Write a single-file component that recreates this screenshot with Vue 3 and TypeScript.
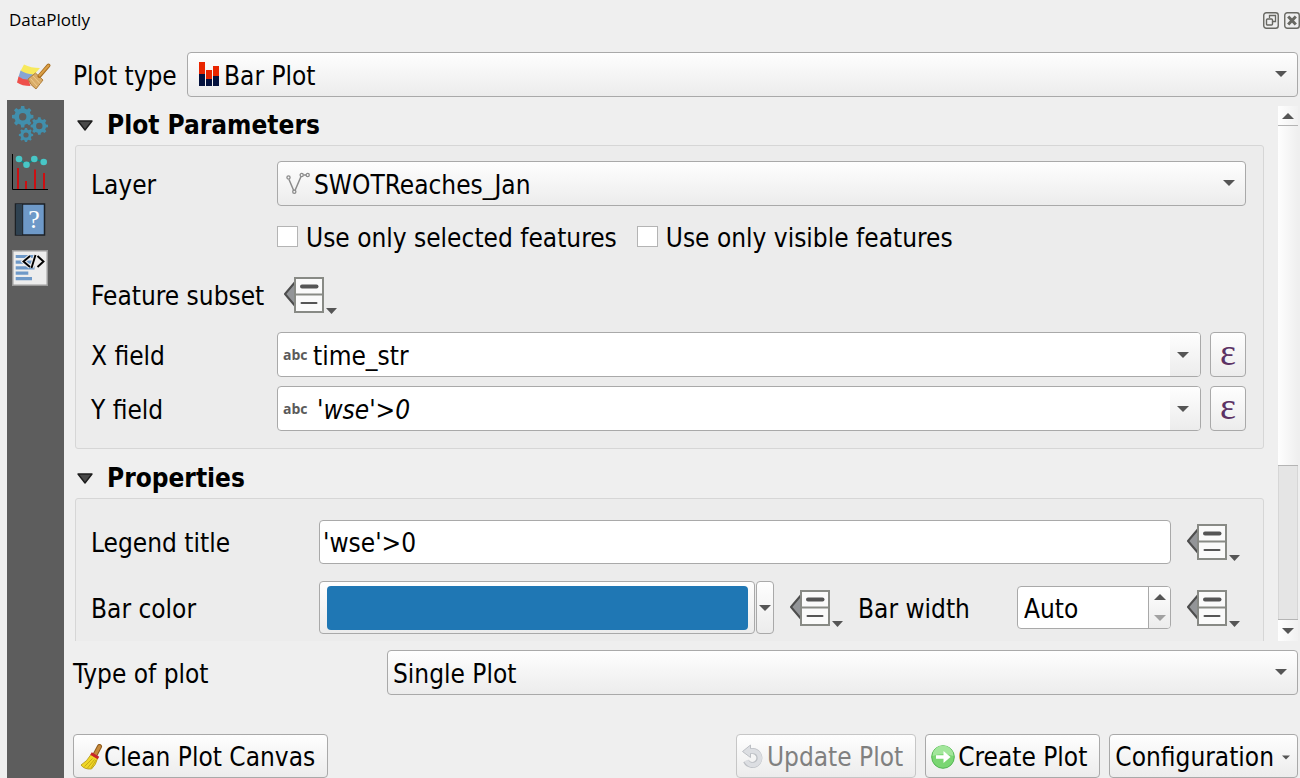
<script setup lang="ts">
import { ref } from 'vue'

const plotType = ref('Bar Plot')
const layer = ref('SWOTReaches_Jan')
const selectedOnly = ref(false)
const visibleOnly = ref(false)
const xField = ref('time_str')
const yField = ref("'wse'>0")
const legendTitle = ref("'wse'>0")
const barWidth = ref('Auto')
const plotMode = ref('Single Plot')

/** Outline of a toothed wheel with a round hole, for an evenodd fill. */
function gear(cx: number, cy: number, outer: number, inner: number, hole: number, teeth: number): string {
  const step = (Math.PI * 2) / teeth
  const points: string[] = []
  for (let i = 0; i < teeth; i++) {
    const a = i * step - Math.PI / 2
    const corners: [number, number][] = [
      [inner, -0.3],
      [outer, -0.19],
      [outer, 0.19],
      [inner, 0.3],
    ]
    for (const [r, k] of corners) {
      const t = a + k * step
      points.push(`${(cx + r * Math.cos(t)).toFixed(2)} ${(cy + r * Math.sin(t)).toFixed(2)}`)
    }
  }
  const ring = `M${cx - hole} ${cy}a${hole} ${hole} 0 1 0 ${hole * 2} 0a${hole} ${hole} 0 1 0 ${-hole * 2} 0Z`
  return `M${points.join('L')}Z${ring}`
}

const gears = [
  gear(10.7, 10.7, 10.8, 8.4, 3.7, 8),
  gear(27.3, 20, 8.8, 6.9, 3.2, 8),
  gear(14, 29, 7.2, 5.6, 2.6, 8),
].join('')
</script>

<template>
  <div class="panel">
    <svg class="defs" aria-hidden="true">
      <symbol id="arrow-down" viewBox="0 0 12 6"><path d="M0 0H12L6 6Z" fill="#555" /></symbol>
      <symbol id="arrow-up" viewBox="0 0 12 6"><path d="M0 6H12L6 0Z" fill="#555" /></symbol>
      <symbol id="fold" viewBox="0 0 16 11">
        <path d="M1 1H15L8 10Z" fill="#484848" stroke="#1c1c1c" stroke-width="1.4" stroke-linejoin="round" />
      </symbol>
      <symbol id="override" viewBox="0 0 54 38">
        <path d="M12 5L1 18L12 31" fill="#939598" stroke="#4d4d4d" stroke-width="2" stroke-linejoin="round" />
        <rect x="11" y="2" width="28" height="34" fill="#fafafa" stroke="#888a85" stroke-width="2" />
        <path d="M11 18.5H39" stroke="#888a85" stroke-width="2" />
        <path d="M18 10.5H32.500" stroke="#555" stroke-width="4" stroke-linecap="round" />
        <path d="M17.500 27H32.500" stroke="#555" stroke-width="2" stroke-linecap="round" />
        <path d="M42 32H53L47.500 38Z" fill="#555" />
      </symbol>
    </svg>

    <header class="titlebar">
      <span>DataPlotly</span>
      <div class="window-buttons">
        <button type="button" aria-label="Float">
          <svg width="16" height="17" viewBox="0 0 16 17" fill="none" stroke="#686862">
            <rect x="0.750" y="0.750" width="14.500" height="15.500" rx="2.500" stroke-width="1.400" />
            <path d="M6.500 6V3.500H12.500V9.500H10" stroke-width="1.300" />
            <rect x="3.500" y="7" width="6" height="6" rx="1" stroke-width="1.400" />
          </svg>
        </button>
        <button type="button" aria-label="Close">
          <svg width="16" height="17" viewBox="0 0 16 17" fill="none" stroke="#686862">
            <rect x="0.750" y="0.750" width="14.500" height="15.500" rx="2.500" stroke-width="1.400" />
            <path d="M4.200 4.500L11.800 12.500M11.800 4.500L4.200 12.500" stroke-width="3" />
          </svg>
        </button>
      </div>
    </header>

    <div class="body">
      <nav class="tabs" aria-label="Pages">
        <button type="button" class="tab active" aria-label="Plot style">
          <svg width="40" height="36" viewBox="0 0 40 36">
            <path d="M12 6.500Q19 10 28 10L21 18Q13 17 8.500 13Z" fill="#f7e95c" />
            <path d="M8.500 12.500Q14 16 21 16.500L16 23Q10 22 6.500 19Z" fill="#86a5d3" />
            <path d="M6.500 18.500Q11 22 16.500 21.500L18.500 28Q10 28 5 24.500Z" fill="#ee504b" />
            <path d="M16 21L23.500 15L31 22L24 31Q18 27 16 21Z" fill="#d9ac68" stroke="#b07f3c" stroke-width="1" />
            <path d="M18.500 20.500L25 28M21 18L28 25.500" stroke="#f0cc8c" stroke-width="1" />
            <path d="M27.500 18L36.500 7.500" stroke="#a66c1f" stroke-width="4" stroke-linecap="round" />
            <path d="M27.500 17.500L36.500 7.500" stroke="#dba047" stroke-width="2" stroke-linecap="round" />
          </svg>
        </button>
        <button type="button" class="tab" aria-label="Plot settings">
          <svg width="36" height="36" viewBox="0 0 36 36"><path :d="gears" fill="#418fac" fill-rule="evenodd" /></svg>
        </button>
        <button type="button" class="tab" aria-label="Plot">
          <svg width="36" height="36" viewBox="0 0 36 36" fill="none">
            <path d="M6 14V35M14 27V35M23 15.500V35M32 19V35" stroke="#cc0f12" stroke-width="2" />
            <path d="M0.500 0V35.500H36" stroke="#000" stroke-width="1" />
            <path d="M7 5L14.500 10.700L22.300 5L31.700 8" stroke="#0e7f7b" stroke-width="1.500" />
            <g fill="#48c6c6">
              <circle cx="7" cy="5" r="3.300" /><circle cx="14.500" cy="10.700" r="3.300" />
              <circle cx="22.300" cy="5" r="3.300" /><circle cx="31.700" cy="8" r="3.300" />
            </g>
          </svg>
        </button>
        <button type="button" class="tab" aria-label="Help">
          <svg width="36" height="36" viewBox="0 0 36 36">
            <rect x="3.500" y="2" width="29" height="31" fill="#6e99c8" stroke="#1c2126" stroke-width="1.500" />
            <rect x="4" y="2.700" width="6.500" height="29.500" fill="#2f4251" />
            <path d="M10.700 2V33" stroke="#1c2126" stroke-width="1" />
            <text x="22" y="26" text-anchor="middle" class="help-mark">?</text>
          </svg>
        </button>
        <button type="button" class="tab" aria-label="Code">
          <svg width="36" height="36" viewBox="0 0 36 36" fill="none">
            <rect x="0.750" y="0.750" width="34.500" height="34.500" fill="#ededed" stroke="#9b9b9b" stroke-width="1.500" />
            <path d="M3.700 6.500H22M3.700 12.200H22M3.700 17.800H22.500M3.700 23.200H16.300M3.700 28.600H20" stroke="#6e99c8" stroke-width="3.200" />
            <g stroke="#ededed" stroke-width="4">
              <path d="M18 6L11.500 11.500L18 17M25.500 6L31.500 11.500L25.500 17M23.500 5L19.500 18" />
            </g>
            <path d="M18 6L11.500 11.500L18 17M25.500 6L31.500 11.500L25.500 17M23.500 5L19.500 18" stroke="#000" stroke-width="1.900" />
          </svg>
        </button>
      </nav>

      <main class="main">
        <div class="row plot-type">
          <label for="plot-type">Plot type</label>
          <div class="combo">
            <svg class="lead bar-icon" width="20" height="24" viewBox="0 0 20 24" aria-hidden="true">
              <path d="M0 0H6V12H0ZM7 8H13V17H7ZM14 4H20V14H14Z" fill="#e92500" />
              <path d="M0 12H6V24H0ZM7 17H13V24H7ZM14 14H20V24H14Z" fill="#04123e" />
            </svg>
            <select id="plot-type" v-model="plotType" class="with-icon"><option>Bar Plot</option></select>
            <svg class="drop" width="12" height="6"><use href="#arrow-down" /></svg>
          </div>
        </div>

        <div class="scroll-area">
          <div class="content">
            <section>
              <h2><svg width="16" height="11"><use href="#fold" /></svg>Plot Parameters</h2>
              <div class="group params">
                <label for="layer">Layer</label>
                <div class="combo">
                  <svg class="lead layer-icon" width="24" height="24" viewBox="0 0 24 24" fill="none" stroke="#8b8b8b" aria-hidden="true">
                    <path d="M3 8.500L7.700 19.500M9 19.500L15 5.500M17.500 4H20" stroke-width="1.500" />
                    <g stroke-width="1.300">
                      <circle cx="2.500" cy="6.500" r="1.600" /><circle cx="8.300" cy="20.700" r="1.600" />
                      <circle cx="15.700" cy="4" r="1.600" /><circle cx="21.700" cy="4" r="1.600" />
                    </g>
                  </svg>
                  <select id="layer" v-model="layer" class="with-icon"><option>SWOTReaches_Jan</option></select>
                  <svg class="drop" width="12" height="6"><use href="#arrow-down" /></svg>
                </div>

                <div class="checks">
                  <label><input v-model="selectedOnly" type="checkbox" />Use only selected features</label>
                  <label><input v-model="visibleOnly" type="checkbox" />Use only visible features</label>
                </div>

                <span class="subset-label">Feature subset</span>
                <div class="subset">
                  <button type="button" class="override" aria-label="Feature subset override">
                    <svg width="54" height="38"><use href="#override" /></svg>
                  </button>
                </div>

                <label for="x-field">X field</label>
                <div class="field">
                  <div class="edit-combo">
                    <span class="kind">abc</span>
                    <input id="x-field" v-model="xField" type="text" />
                    <button type="button" aria-label="Choose X field"><svg width="12" height="6"><use href="#arrow-down" /></svg></button>
                  </div>
                  <button type="button" class="expression" aria-label="X expression">ε</button>
                </div>

                <label for="y-field" class="y-row">Y field</label>
                <div class="field y-row">
                  <div class="edit-combo">
                    <span class="kind">abc</span>
                    <input id="y-field" v-model="yField" type="text" class="formula" />
                    <button type="button" aria-label="Choose Y field"><svg width="12" height="6"><use href="#arrow-down" /></svg></button>
                  </div>
                  <button type="button" class="expression" aria-label="Y expression">ε</button>
                </div>
              </div>
            </section>

            <section>
              <h2><svg width="16" height="11"><use href="#fold" /></svg>Properties</h2>
              <div class="group props">
                <div class="row">
                  <label for="legend-title" class="prop-label">Legend title</label>
                  <input id="legend-title" v-model="legendTitle" type="text" class="line-edit" />
                  <button type="button" class="override" aria-label="Legend title override">
                    <svg width="54" height="38"><use href="#override" /></svg>
                  </button>
                </div>
                <div class="row">
                  <label for="bar-color" class="prop-label">Bar color</label>
                  <div class="color-split">
                    <button id="bar-color" type="button" class="color"><span class="swatch"></span></button>
                    <button type="button" class="color-menu" aria-label="Color menu"><svg width="12" height="6"><use href="#arrow-down" /></svg></button>
                  </div>
                  <button type="button" class="override" aria-label="Bar color override">
                    <svg width="54" height="38"><use href="#override" /></svg>
                  </button>
                  <label for="bar-width" class="width-label">Bar width</label>
                  <div class="spin">
                    <input id="bar-width" v-model="barWidth" type="text" />
                    <div class="steps">
                      <button type="button" aria-label="Increase"><svg width="12" height="6"><use href="#arrow-up" /></svg></button>
                      <button type="button" aria-label="Decrease" disabled><svg width="12" height="6"><use href="#arrow-down" /></svg></button>
                    </div>
                  </div>
                  <button type="button" class="override" aria-label="Bar width override">
                    <svg width="54" height="38"><use href="#override" /></svg>
                  </button>
                </div>
              </div>
            </section>
          </div>

          <div class="scrollbar">
            <button type="button" class="up" aria-label="Scroll up"><svg width="12" height="6"><use href="#arrow-up" /></svg></button>
            <div class="track"><div class="thumb"></div></div>
            <button type="button" class="down" aria-label="Scroll down"><svg width="12" height="6"><use href="#arrow-down" /></svg></button>
          </div>
        </div>

        <div class="row plot-mode">
          <label for="plot-mode">Type of plot</label>
          <div class="combo">
            <select id="plot-mode" v-model="plotMode"><option>Single Plot</option></select>
            <svg class="drop" width="12" height="6"><use href="#arrow-down" /></svg>
          </div>
        </div>

        <footer class="actions">
          <button type="button" class="action clean">
            <svg width="24" height="26" viewBox="0 0 24 26">
              <path d="M20.500 2.500L16 11" stroke="#8f5a1a" stroke-width="5" stroke-linecap="round" />
              <path d="M20.500 2.500L16 11" stroke="#c78a3c" stroke-width="3" stroke-linecap="round" />
              <path d="M12 10.500L18.500 14.500Q17 21 12.500 25Q5 25.500 2 21Q8 17.500 12 10.500Z" fill="#f0d726" stroke="#b09310" stroke-width="0.800" />
              <path d="M13.500 14.500L5.500 22.500M15.500 15.500L8.500 24M17 16L12 24" stroke="#c2a415" stroke-width="0.900" />
              <path d="M12 9.500L19.500 14" stroke="#c8242a" stroke-width="3" />
            </svg>Clean Plot Canvas
          </button>
          <button type="button" class="action update" disabled>
            <svg width="22" height="26" viewBox="0 0 22 26" fill="none">
              <path d="M8 7H11A7 7 0 1 1 4 17" stroke="#bcbfc4" stroke-width="6" />
              <path d="M8.500 1L0.500 7.500L8.500 13.500Z" fill="#dcdee2" stroke="#bcbfc4" />
              <path d="M7 7H11A7 7 0 1 1 4.300 16.500" stroke="#dcdee2" stroke-width="4.400" />
            </svg>Update Plot
          </button>
          <button type="button" class="action create">
            <svg width="24" height="26" viewBox="0 0 24 26">
              <circle cx="12" cy="13" r="11.300" fill="#7ad672" stroke="#52b552" stroke-width="1" />
              <path d="M1.500 12A10.500 10.500 0 0 1 22.500 12Q12 8 1.500 12Z" fill="#a2e69b" />
              <path d="M5 11.200H12.500V7L19.500 13L12.500 19V14.800H5Z" fill="#fff" />
            </svg>Create Plot
          </button>
          <button type="button" class="action config">Configuration<svg width="8" height="5"><use href="#arrow-down" /></svg></button>
        </footer>
      </main>
    </div>
  </div>
</template>

<style>
body {
  margin: 0;
  background: #efefef;
}
</style>

<style scoped>
.panel {
  display: flex;
  flex-direction: column;
  height: 100vh;
  overflow: hidden;
  color: #000;
  background: #efefef;
  font: 26px/36px "DejaVu Sans Condensed", "Noto Sans", sans-serif;
}
.panel *,
.panel *::before {
  box-sizing: border-box;
}
.defs {
  position: absolute;
  width: 0;
  height: 0;
}
svg {
  display: block;
  flex: none;
}
button,
input,
select {
  margin: 0;
  padding: 0;
  border: 0;
  border-radius: 0;
  background: none;
  color: inherit;
  font: inherit;
  outline: none;
}
label,
.subset-label,
input[type="text"] {
  padding-top: 2px;
}
.titlebar {
  display: flex;
  flex: none;
  align-items: center;
  justify-content: space-between;
  height: 52px;
  padding: 0 0 12px 9px;
  font: 17px/24px "Open Sans", sans-serif;
}
.window-buttons {
  display: flex;
  gap: 5px;
}
.body {
  display: flex;
  flex: 1;
  min-height: 0;
}
.tabs {
  display: flex;
  flex: none;
  flex-direction: column;
  width: 57px;
  margin: 0 9px 0 7px;
  background: #5d5d5d;
}
.tab {
  display: flex;
  align-items: center;
  height: 48px;
  padding-left: 5px;
}
.tab.active {
  background: #efefef;
}
.help-mark {
  fill: #fff;
  font: 26px "Liberation Serif", serif;
}
.main {
  display: flex;
  flex: 1;
  flex-direction: column;
  min-width: 0;
  padding-right: 2px;
}
.row {
  display: flex;
  align-items: center;
}
.plot-type {
  flex: none;
  margin-bottom: 9px;
}
.plot-type label {
  width: 114px;
}
.combo {
  position: relative;
  flex: 1;
  min-width: 0;
}
.combo select {
  display: block;
  width: 100%;
  height: 45px;
  padding: 2px 32px 0 5px;
  appearance: none;
}
.combo select.with-icon {
  padding-left: 36px;
}
.lead {
  position: absolute;
  left: 12px;
  top: 10px;
}
.layer-icon {
  left: 9px;
}
.drop {
  position: absolute;
  right: 11px;
  top: 19px;
  pointer-events: none;
}
.combo select,
.action,
.expression,
.color,
.color-menu {
  border: 1px solid #a9a9a9;
  border-radius: 4px;
  background: linear-gradient(#fefefe, #ececec);
}
.scroll-area {
  display: flex;
  flex: 1;
  min-height: 0;
  overflow: hidden;
}
.content {
  flex: 1;
  min-width: 0;
}
section + section {
  margin-top: 10px;
}
h2 {
  display: flex;
  align-items: center;
  gap: 14px;
  margin: 0;
  padding: 1px 0 2px 4px;
  font: inherit;
  font-weight: bold;
}
.group {
  margin: 0 14px 0 2px;
  border: 1px solid #d6d6d6;
  border-radius: 3px;
  background: #ececec;
}
.params {
  display: grid;
  grid-template-columns: 186px 1fr;
  align-items: center;
  padding: 15px 17px 17px 15px;
}
.checks {
  display: flex;
  grid-column: 2;
  align-items: center;
  gap: 20px;
  height: 62px;
}
.checks label {
  display: flex;
  align-items: center;
  gap: 8px;
  white-space: nowrap;
}
.checks input {
  width: 21px;
  height: 21px;
  margin-bottom: 4px;
  border: 1px solid #b4b4b4;
  background: #fff;
  appearance: none;
}
.checks input:checked {
  background: #555;
}
.subset {
  display: flex;
  align-items: center;
  height: 54px;
  margin-bottom: 10px;
  padding-left: 7px;
}
.subset-label {
  margin-bottom: 10px;
}
.override {
  flex: none;
}
.field {
  display: flex;
  gap: 9px;
}
.y-row {
  margin-top: 9px;
}
.edit-combo {
  display: flex;
  flex: 1;
  align-items: center;
  min-width: 0;
  height: 45px;
  overflow: hidden;
  border: 1px solid #a9a9a9;
  border-radius: 4px;
  background: #fff;
}
.kind {
  width: 35px;
  padding-left: 5px;
  color: #5a5a5a;
  font: bold 14px/36px "Open Sans", sans-serif;
}
.edit-combo input {
  flex: 1;
  min-width: 0;
}
.edit-combo .formula {
  padding-left: 4px;
  font-style: italic;
}
.edit-combo button {
  display: flex;
  align-items: center;
  justify-content: center;
  width: 30px;
  height: 100%;
  padding-right: 4px;
  background: linear-gradient(#fefefe, #ececec);
}
.expression {
  width: 36px;
  height: 45px;
  padding-bottom: 6px;
  color: #5c3264;
  font: 38px/36px "Liberation Serif", serif;
}
.props {
  display: flex;
  flex-direction: column;
  gap: 17px;
  padding: 21px 22px 17px 15px;
}
.prop-label {
  flex: none;
  width: 228px;
}
.line-edit {
  flex: 1;
  min-width: 0;
  height: 44px;
  margin-right: 16px;
  padding-left: 3px;
  border: 1px solid #a9a9a9;
  border-radius: 4px;
  background: #fff;
}
.color-split {
  display: flex;
  flex: 1;
  gap: 1px;
  min-width: 0;
  height: 53px;
  margin-right: 16px;
}
.color {
  display: flex;
  flex: 1;
  padding: 4px 6px 3px 7px;
}
.swatch {
  flex: 1;
  align-self: stretch;
  border-radius: 4px;
  background: #1f77b4;
}
.color-menu {
  display: flex;
  align-items: center;
  justify-content: center;
  width: 18px;
}
.width-label {
  flex: none;
  width: 159px;
  margin-left: 14px;
}
.spin {
  display: flex;
  flex: none;
  width: 154px;
  height: 43px;
  margin-right: 16px;
  overflow: hidden;
  border: 1px solid #a9a9a9;
  border-radius: 4px;
  background: #fff;
}
.spin input {
  flex: 1;
  min-width: 0;
  padding-left: 6px;
}
.steps {
  display: flex;
  flex-direction: column;
  width: 22px;
  border-left: 1px solid #a9a9a9;
  background: linear-gradient(#fefefe, #ececec);
}
.steps button {
  display: flex;
  flex: 1;
  align-items: center;
  justify-content: center;
}
.steps button:disabled {
  opacity: 0.5;
}
.scrollbar {
  display: flex;
  flex: none;
  flex-direction: column;
  width: 20px;
}
.up,
.down {
  display: flex;
  flex: none;
  align-items: center;
  justify-content: center;
  height: 20px;
  background: linear-gradient(90deg, #fefefe, #f1f1f1);
}
.up {
  border-bottom: 1px solid #b4b4b4;
}
.down {
  height: 22px;
  border-top: 1px solid #b4b4b4;
}
.track {
  flex: 1;
  border: solid #d6d6d6;
  border-width: 0 1px;
  background: #e5e5e5;
}
.thumb {
  height: 69%;
  margin: 0 -1px;
  border-bottom: 1px solid #b4b4b4;
  background: linear-gradient(90deg, #fefefe, #efefef);
}
.plot-mode {
  flex: none;
  margin: 9px 0 39px;
}
.plot-mode label {
  width: 314px;
}
.actions {
  display: flex;
  flex: none;
  gap: 9px;
}
.action {
  display: flex;
  align-items: center;
  height: 44px;
  padding: 2px 12px 0 5px;
  white-space: nowrap;
}
.clean {
  gap: 1px;
  margin-right: auto;
}
.update {
  gap: 3px;
  border-color: #c6c6c6;
  color: #808080;
}
.create {
  gap: 3px;
}
.config {
  gap: 8px;
  padding-right: 7px;
}
</style>
